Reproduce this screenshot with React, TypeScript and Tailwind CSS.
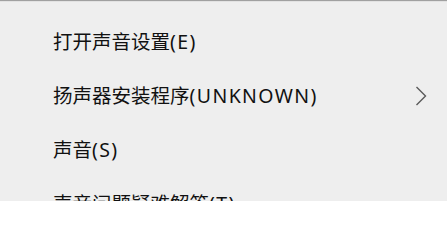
const items: { text: string; key: string; submenu?: boolean }[] = [
  { text: "打开声音设置", key: "(E)" },
  { text: "扬声器安装程序", key: "(UNKNOWN)", submenu: true },
  { text: "声音", key: "(S)" },
  { text: "声音问题疑难解答", key: "(T)" },
];

const Chevron = () => (
  <svg width="12" height="20" viewBox="0 0 12 20" fill="none" className="shrink-0">
    <path d="M1.5 1 L10.5 10 L1.5 19" stroke="#5a5a5a" strokeWidth="1.4" />
  </svg>
);

export default function App() {
  return (
    <div
      className="h-[201px] w-[447px] overflow-hidden border-t border-[#a0a0a0] bg-[#eeeeee]"
      style={{ fontFamily: '"Noto Sans", "Noto Sans CJK SC", sans-serif' }}
    >
      <div className="h-px bg-[#e2e2e2]" />
      <div className="pt-[13px]">
        {items.map((item) => (
          <div key={item.text} className="flex h-[54px] items-center justify-between pl-[53px] pr-[20px]">
            <span className="whitespace-nowrap text-[19.5px] leading-none text-[#111]">
              {item.text}
              <span className="tracking-[1.4px]">{item.key}</span>
            </span>
            {item.submenu && <Chevron />}
          </div>
        ))}
      </div>
    </div>
  );
}
